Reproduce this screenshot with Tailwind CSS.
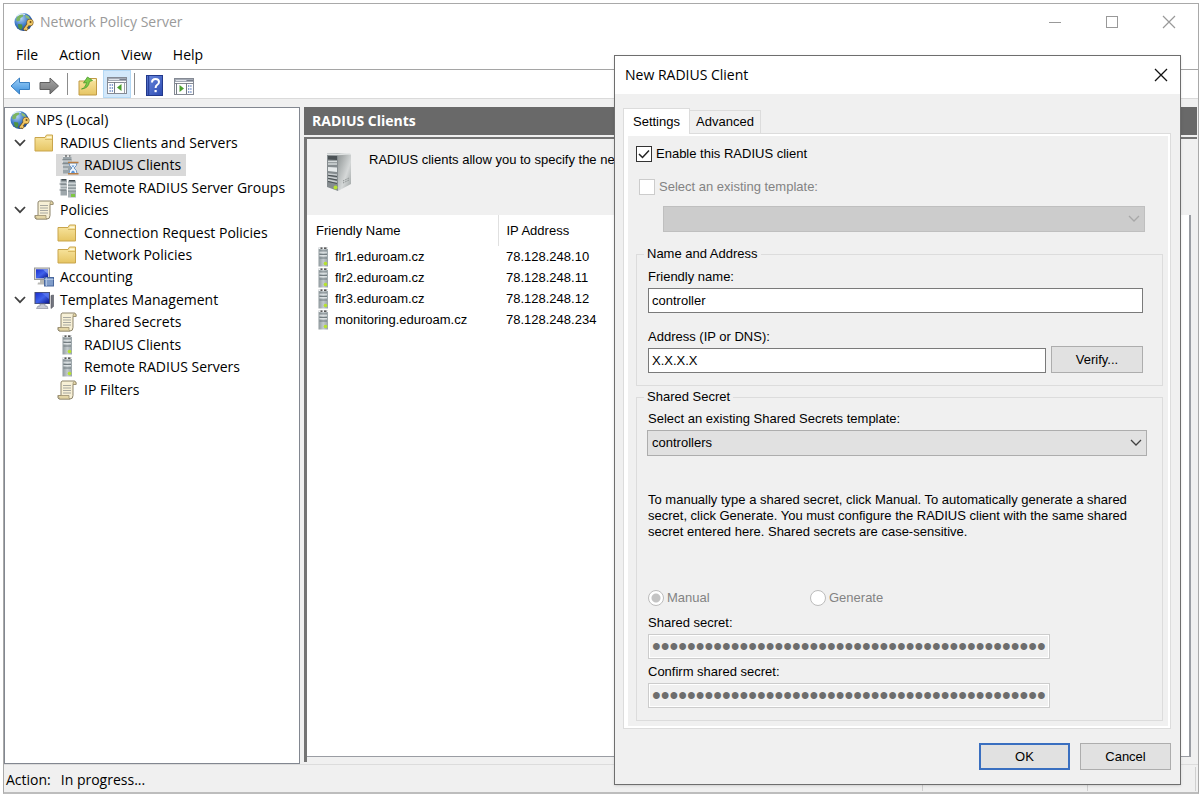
<!DOCTYPE html>
<html lang="en">
<head>
<meta charset="utf-8">
<title>Network Policy Server</title>
<script src="https://cdn.jsdelivr.net/npm/@tailwindcss/browser@4"></script>
</head>
<body class="bg-white">
<svg class="absolute size-0" aria-hidden="true">
  <defs>
    <radialGradient id="gBlue" cx="0.35" cy="0.3" r="0.8"><stop offset="0" stop-color="#b9d8f6"/><stop offset="0.5" stop-color="#3f7bc8"/><stop offset="1" stop-color="#1a3d78"/></radialGradient>
    <linearGradient id="gFold" x1="0" y1="0" x2="0" y2="1"><stop offset="0" stop-color="#f9e7a4"/><stop offset="1" stop-color="#e6c563"/></linearGradient>
    <linearGradient id="gArrow" x1="0" y1="0" x2="0" y2="1"><stop offset="0" stop-color="#9fd0f7"/><stop offset="1" stop-color="#3a8fdd"/></linearGradient>
    <linearGradient id="gArrowG" x1="0" y1="0" x2="0" y2="1"><stop offset="0" stop-color="#a5a5a5"/><stop offset="1" stop-color="#747474"/></linearGradient>
    <linearGradient id="gSrv" x1="0" y1="0" x2="1" y2="0"><stop offset="0" stop-color="#8f999d"/><stop offset="0.5" stop-color="#c3cacd"/><stop offset="1" stop-color="#9aa4a8"/></linearGradient>
    <linearGradient id="gScr" x1="0" y1="0" x2="1" y2="1"><stop offset="0" stop-color="#1c2fd0"/><stop offset="0.5" stop-color="#3f62ea"/><stop offset="1" stop-color="#0b1690"/></linearGradient>
    <linearGradient id="gHelp" x1="0" y1="0" x2="1" y2="1"><stop offset="0" stop-color="#6d8ce0"/><stop offset="1" stop-color="#2a49b0"/></linearGradient>
    <linearGradient id="gSide" x1="0" y1="0" x2="1" y2="1"><stop offset="0" stop-color="#8e9494"/><stop offset="0.6" stop-color="#d5d8d8"/><stop offset="1" stop-color="#9aa0a0"/></linearGradient>
    <symbol id="globe" viewBox="0 0 20 20">
      <circle cx="9.500" cy="10" r="9" fill="url(#gBlue)"/>
      <path d="M3 5Q5 2 9 2L9 4.500 6.500 6 6 8.500 3.500 9.500 2 8Z" fill="#7cb562"/>
      <path d="M11.500 2.500L15 4.500 16 7 13 6.500 11.500 5Z" fill="#8dbb74"/>
      <path d="M4 12L8 12.500 8.500 15 7 18 4.500 16Z" fill="#4f9440"/>
      <path d="M3 4Q7 0.500 11 2.500" stroke="#dcecfb" stroke-width="1.200" fill="none"/>
      <path d="M14.500 12L10 18M11.500 16L13.500 18" stroke="#7d5a1e" stroke-width="3.200"/>
      <circle cx="16" cy="10.500" r="3.500" fill="#7d5a1e"/>
      <circle cx="16" cy="10.500" r="2.900" fill="#f0c765"/>
      <circle cx="16.500" cy="10" r="1" fill="#6b4c12"/>
      <path d="M14.500 12L10.300 17.700M11.500 16L13.300 17.700" stroke="#f0c765" stroke-width="1.800"/>
    </symbol>
    <symbol id="folder" viewBox="0 0 20 18">
      <path d="M1 3.500H11L12.500 1H18.500V17H1Z" fill="url(#gFold)" stroke="#c9a54c" stroke-width="1"/>
      <path d="M13 2.500H17.500V4H12.500Z" fill="#fff8da"/>
      <path d="M11 5.500H18" stroke="#d9b963" stroke-width="1"/>
    </symbol>
    <symbol id="scroll" viewBox="0 0 20 20">
      <path d="M5 1H17.500Q19.500 1.500 19 4.500H16V15.500Q16 19 13 19H2Q0.500 18.500 1 15.500H4V3Q4 1.500 5 1Z" fill="#f7f0d6" stroke="#8c836a" stroke-width="1"/>
      <path d="M16 4.500Q15.500 2 17.500 1.500L19 2.500V4.500ZM1 15.500H12Q11.500 18 13 19H2.500Z" fill="#e3d5a5" stroke="#9a8f70" stroke-width="0.800"/>
      <path d="M6 5.500H14M6 8H14M6 10.500H14M6 13H14" stroke="#a8a8a0" stroke-width="1.200"/>
    </symbol>
    <symbol id="server" viewBox="0 0 12 20">
      <rect x="1.500" y="0.500" width="9.500" height="19" fill="url(#gSrv)"/>
      <rect x="1.500" y="0.500" width="9.500" height="1.500" fill="#f2f4f5"/>
      <rect x="3.500" y="0.500" width="2" height="1.300" fill="#333"/><rect x="7" y="0.500" width="2.500" height="1.300" fill="#333"/>
      <path d="M2.500 4H10M2.500 7.500H10M2.500 11H10" stroke="#6c767b" stroke-width="0.900"/>
      <path d="M2.500 5.200H10M2.500 8.700H10" stroke="#e4e8ea" stroke-width="1"/>
      <circle cx="8.500" cy="16.500" r="1.800" fill="#b6e22f"/>
    </symbol>
    <symbol id="servers" viewBox="0 0 18 20">
      <rect x="1.500" y="1" width="6.500" height="16.500" fill="#9ea7ab"/><rect x="2.500" y="1" width="4.500" height="1.500" fill="#414a4f"/>
      <path d="M0.500 5H8M1.500 8H8M0.500 11H8" stroke="#e4e8ea" stroke-width="1"/><path d="M0.500 6H7M0.500 12H7" stroke="#5a6469" stroke-width="0.800"/>
      <rect x="9" y="2.500" width="8" height="17" fill="#a9b2b6"/><rect x="10" y="2" width="6" height="1.500" fill="#414a4f"/>
      <path d="M9 6H17M9 9H17M9 12H17" stroke="#eef1f2" stroke-width="1.200"/><path d="M9 7H17M9 10H17M9 13H17" stroke="#6f797e" stroke-width="0.800"/>
      <rect x="12" y="16" width="4" height="3" fill="#7ec742"/>
    </symbol>
    <symbol id="serverwait" viewBox="0 0 18 20">
      <rect x="2" y="0.500" width="8.500" height="18" fill="#9aa4a9"/><rect x="2" y="0.500" width="8.500" height="1.500" fill="#eee"/><path d="M4 1H6M8 1H9.500" stroke="#333"/>
      <path d="M1 5H10.500M1 9H8" stroke="#5a6469" stroke-width="0.800"/><path d="M1 6H10.500M1 10H8M2 14H7" stroke="#e8ecee"/>
      <path d="M8 8H16Q16 11 13 13Q16 15 16 18.500H8Q8 15 11 13Q8 11 8 8Z" fill="#f1f7fd" stroke="#6f97c4" stroke-width="1"/>
      <path d="M10 18Q10.500 15.500 12 15.500Q13.500 15.500 14 18ZM10.500 10.500H13.500L12 12.500Z" fill="#5a93d8"/>
      <path d="M7 7.500H17.500M7 18.800H17.500" stroke="#b87c42" stroke-width="1.600"/>
    </symbol>
    <symbol id="acct" viewBox="0 0 20 20">
      <rect x="0.500" y="1" width="15" height="11.500" fill="#d8d8d4" stroke="#9a9a98"/>
      <rect x="2" y="2.300" width="12" height="9" fill="url(#gScr)"/>
      <path d="M9 2.500H14V7Z" fill="#8fa6f3" opacity="0.700"/>
      <path d="M6 13H10V15.500H12V17.500H3.500L4 15.500H6Z" fill="#b9b9b5"/>
      <rect x="10.500" y="10.500" width="9" height="8.500" fill="#7f9cc9" stroke="#4a689d"/>
      <path d="M12.500 10.500V19M10.500 12.500H19.500" stroke="#b9cbe6" stroke-width="0.800"/>
    </symbol>
    <symbol id="tmpl" viewBox="0 0 20 20">
      <rect x="0.500" y="2" width="15.500" height="12" fill="#4a4f6b"/>
      <rect x="1.500" y="2.800" width="13.500" height="10.500" fill="url(#gScr)"/>
      <path d="M8 3H15V9Z" fill="#5c7af0" opacity="0.700"/>
      <path d="M6 14H11V16H13L14 18.500H2.500L4 16H6Z" fill="#c7cad4" stroke="#7e8190" stroke-width="0.600"/>
      <path d="M17 5.500L19.500 5V16.500L17 18.500Z" fill="#72757f" stroke="#50525a" stroke-width="0.600"/>
    </symbol>
    <symbol id="bigserver" viewBox="0 0 26 40">
      <path d="M12 1L25 2.500V32L12 39Z" fill="url(#gSide)"/>
      <path d="M1 1.500L12 1V39L1 35Z" fill="#858c8f"/>
      <path d="M1 1.500L24 1.200 25 2.500 12 3.200 1 3Z" fill="#dfe2e2"/>
      <path d="M2 4L11 4V8L2 7.500Z" fill="#4b5255"/>
      <path d="M2 9.500H11M2 12H11" stroke="#d5dadb" stroke-width="1.400"/>
      <path d="M2 15L11 15.500V20L2 19Z" fill="#e6eaeb"/>
      <path d="M2 22L11 23M2 25L11 26.500M2 28L11 30" stroke="#c8cdcf" stroke-width="1.300"/>
      <path d="M2 23.300L11 24.500M2 26.300L11 28M2 29.500L11 31.500" stroke="#4b5255" stroke-width="1"/>
      <path d="M17 29L23 26M17 31L23 28" stroke="#868c8c" stroke-width="1" stroke-dasharray="1.500 1"/>
      <circle cx="9.500" cy="35.500" r="2" fill="#b6e22f"/>
    </symbol>
    <symbol id="chev" viewBox="0 0 12 8"><path d="M1 1L6 6.200 11 1" fill="none" stroke="currentColor" stroke-width="1.800"/></symbol>
    <symbol id="console" viewBox="0 0 20 17">
      <rect x="0.500" y="0.500" width="19" height="16" fill="#fdfdfd" stroke="#858a94"/>
      <rect x="1" y="1" width="18" height="3" fill="#a4aab5"/><path d="M2 2.500H12" stroke="#dfe2e8"/><path d="M13.500 2.500H14.500M15.500 2.500H16.500M17.500 2.500H18.500" stroke="#4e5563"/>
      <path d="M1 5.500H19" stroke="#858a94"/>
    </symbol>
  </defs>
</svg>

<div class="relative flex h-screen min-h-[800px] flex-col bg-white pt-[3px] pr-1 pb-[6px] pl-[3px] font-['Open_Sans',sans-serif] text-sm text-black">
  <div class="flex flex-1 flex-col border border-[#a9a9a9] border-b-2 border-b-[#bdbdbd] bg-[#f0f0f0]">

    <header class="flex h-9 items-center bg-white pl-[10px] pr-[22px]">
      <svg class="size-5"><use href="#globe"/></svg>
      <h1 class="ml-[6px] flex-1 text-[#9a9a9a]">Network Policy Server</h1>
      <div class="flex items-center gap-[43px] text-[#999]">
        <button aria-label="Minimize"><svg class="h-[14px] w-[14px]" viewBox="0 0 14 14"><path d="M1 7.500H13" stroke="currentColor"/></svg></button>
        <button aria-label="Maximize"><svg class="h-[14px] w-[14px]" viewBox="0 0 14 14"><rect x="1.500" y="1.500" width="11" height="11" fill="none" stroke="currentColor"/></svg></button>
        <button aria-label="Close"><svg class="h-[14px] w-[14px]" viewBox="0 0 14 14"><path d="M1 1L13 13M13 1L1 13" stroke="currentColor" stroke-width="1.200"/></svg></button>
      </div>
    </header>

    <nav class="flex h-[30px] items-center gap-[21px] border-b border-[#a5a5a5] bg-white pl-3">
      <button>File</button><button>Action</button><button>View</button><button>Help</button>
    </nav>

    <div class="flex h-7 items-center bg-white pl-[6px]">
      <button aria-label="Back" class="pt-1"><svg class="h-[18px] w-[21px]" viewBox="0 0 21 18"><path d="M1 9L9.500 1V5.500H19.500V12.500H9.500V17Z" fill="url(#gArrow)" stroke="#3a7fc1"/></svg></button>
      <button aria-label="Forward" class="ml-2 pt-1"><svg class="h-[18px] w-[21px]" viewBox="0 0 21 18"><path d="M19.500 9L11 1V5.500H1V12.500H11V17Z" fill="url(#gArrowG)" stroke="#5f5f5f"/></svg></button>
      <span class="ml-[7px] h-[22px] w-px bg-[#8c8c8c]"></span>
      <button aria-label="Up one level" class="ml-[10px] pt-1"><svg class="h-[20px] w-[20px]" viewBox="0 0 20 20"><path d="M1 5H10L12 2.500H18.500V19H1Z" fill="url(#gFold)" stroke="#c09a45"/><path d="M13 4H17.500" stroke="#fff8da" stroke-width="1.500"/><path d="M3.500 13Q7.500 12 8.500 6.500L5.500 7 9.500 1 14.500 4.500 11.500 5.500Q10.500 12.500 3.500 13Z" fill="#7cca4a" stroke="#4a9a2a" stroke-width="0.800"/></svg></button>
      <button aria-label="Show or hide console tree" class="ml-[5px] flex h-7 w-7 items-center justify-center border border-[#b5d9f5] bg-[#d3e8fa] pt-[3px]"><svg class="h-[17px] w-5" viewBox="0 0 20 17"><use href="#console"/><path d="M7.500 5V16" stroke="#747a85"/><path d="M2.500 8H6M2.500 11H6M2.500 14H6" stroke="#5f7fc0" stroke-width="1.300" stroke-dasharray="1.300 1"/><path d="M14.500 7V14L10 10.500Z" fill="#4aa02c"/><path d="M17.500 5V16" stroke="#9aa0aa"/></svg></button>
      <span class="ml-[3px] h-[22px] w-px bg-[#8c8c8c]"></span>
      <button aria-label="Help topics" class="ml-[11px] pt-[2px]"><svg class="h-[21px] w-[17px]" viewBox="0 0 17 21"><rect x="0.500" y="0.500" width="16" height="20" fill="url(#gHelp)" stroke="#22398c"/><path d="M2.500 1V20" stroke="#2a419a" stroke-width="1.500"/><path d="M6 7.500Q6 4 9.500 4Q13 4 13 7Q13 8.800 11 10Q9.600 11 9.600 13" fill="none" stroke="#fff" stroke-width="2"/><rect x="8.500" y="15" width="2.200" height="2.200" fill="#fff"/></svg></button>
      <button aria-label="Show or hide action pane" class="ml-[11px] pt-1"><svg class="h-[17px] w-5" viewBox="0 0 20 17"><use href="#console"/><path d="M12.500 5V16M2.500 5V16" stroke="#747a85"/><path d="M14 8H17.500M14 11H17.500M14 14H17.500" stroke="#5f7fc0" stroke-width="1.300" stroke-dasharray="1.300 1"/><path d="M5.500 7V14L10 10.500Z" fill="#4aa02c"/></svg></button>
    </div>
    <div class="h-[9px] border-t border-[#dadada]"></div>

    <main class="flex flex-1 gap-1">
      <aside class="w-[296px] border border-[#828790] bg-white pt-px">
        <ul role="tree" class="grid h-[292px] auto-rows-fr text-sm">
          <li role="treeitem" class="flex items-center gap-[6px] pl-[5px]"><svg class="size-5"><use href="#globe"/></svg>NPS (Local)</li>
          <li role="treeitem" class="flex items-center pl-[9px]"><svg class="h-2 w-3 text-[#404040]"><use href="#chev"/></svg><svg class="ml-2 mr-[6px] h-[18px] w-5"><use href="#folder"/></svg>RADIUS Clients and Servers</li>
          <li role="treeitem" aria-selected="true" class="flex items-center pl-[51px]"><span class="flex h-full items-center bg-[#d9d9d9] pl-[5px] pr-[5px]"><svg class="mr-[5px] h-5 w-[18px]"><use href="#serverwait"/></svg>RADIUS Clients</span></li>
          <li role="treeitem" class="flex items-center pl-[54px]"><svg class="mr-[7px] h-5 w-[18px]"><use href="#servers"/></svg>Remote RADIUS Server Groups</li>
          <li role="treeitem" class="flex items-center pl-[9px]"><svg class="h-2 w-3 text-[#404040]"><use href="#chev"/></svg><svg class="ml-2 mr-[6px] size-5"><use href="#scroll"/></svg>Policies</li>
          <li role="treeitem" class="flex items-center pl-[52px]"><svg class="mr-[7px] h-[18px] w-5"><use href="#folder"/></svg>Connection Request Policies</li>
          <li role="treeitem" class="flex items-center pl-[52px]"><svg class="mr-[7px] h-[18px] w-5"><use href="#folder"/></svg>Network Policies</li>
          <li role="treeitem" class="flex items-center pl-[29px]"><svg class="mr-[6px] size-5"><use href="#acct"/></svg>Accounting</li>
          <li role="treeitem" class="flex items-center pl-[9px]"><svg class="h-2 w-3 text-[#404040]"><use href="#chev"/></svg><svg class="ml-2 mr-[6px] size-5"><use href="#tmpl"/></svg>Templates Management</li>
          <li role="treeitem" class="flex items-center pl-[52px]"><svg class="mr-[7px] size-5"><use href="#scroll"/></svg>Shared Secrets</li>
          <li role="treeitem" class="flex items-center pl-[56px]"><svg class="mr-[11px] h-5 w-3"><use href="#server"/></svg>RADIUS Clients</li>
          <li role="treeitem" class="flex items-center pl-[56px]"><svg class="mr-[11px] h-5 w-3"><use href="#server"/></svg>Remote RADIUS Servers</li>
          <li role="treeitem" class="flex items-center pl-[52px]"><svg class="mr-[7px] size-5"><use href="#scroll"/></svg>IP Filters</li>
        </ul>
      </aside>

      <section class="mr-px flex flex-1 flex-col pb-[2px]">
        <h2 class="flex h-7 items-center bg-[#696969] pl-2 font-bold text-white">RADIUS Clients</h2>
        <div class="mt-[2px] flex flex-1 flex-col border-t-2 border-l-[3px] border-[#747474] pb-[5px] pr-[6px] font-['Liberation_Sans',sans-serif]">
          <div class="flex h-[76px] items-start pl-[19px] pt-[13px]">
            <svg class="h-10 w-[26px]"><use href="#bigserver"/></svg>
            <p class="ml-[17px] text-[13px] leading-4 whitespace-nowrap">RADIUS clients allow you to specify the network</p>
          </div>
          <div class="flex-1 border-r-2 border-b border-[#9a9da3] bg-white">
            <table class="text-left text-[13px] leading-4">
              <thead><tr class="h-[31px]"><th class="w-[191px] border-r border-[#e0e0e0] pl-[9px] font-normal">Friendly Name</th><th class="pl-2 font-normal">IP Address</th></tr></thead>
              <tbody>
                <tr class="h-[21px]"><td class="pl-[10px]"><span class="flex items-center gap-[6px]"><svg class="h-5 w-3"><use href="#server"/></svg>flr1.eduroam.cz</span></td><td class="pl-2">78.128.248.10</td></tr>
                <tr class="h-[21px]"><td class="pl-[10px]"><span class="flex items-center gap-[6px]"><svg class="h-5 w-3"><use href="#server"/></svg>flr2.eduroam.cz</span></td><td class="pl-2">78.128.248.11</td></tr>
                <tr class="h-[21px]"><td class="pl-[10px]"><span class="flex items-center gap-[6px]"><svg class="h-5 w-3"><use href="#server"/></svg>flr3.eduroam.cz</span></td><td class="pl-2">78.128.248.12</td></tr>
                <tr class="h-[21px]"><td class="pl-[10px]"><span class="flex items-center gap-[6px]"><svg class="h-5 w-3"><use href="#server"/></svg>monitoring.eduroam.cz</span></td><td class="pl-2">78.128.248.234</td></tr>
              </tbody>
            </table>
          </div>
        </div>
      </section>
    </main>

    <footer class="flex h-7 items-center border-t border-[#dcdcdc] pl-[2px]">
      <span class="flex flex-1 gap-[10px] pt-[2px]"><span>Action:</span><span>In progress...</span></span>
      <span class="h-6 w-[166px] border-x border-[#d0d0d0]"></span>
      <span class="mr-[2px] h-6 w-[108px] border-r border-[#d0d0d0]"></span>
    </footer>
  </div>

  <div role="dialog" aria-label="New RADIUS Client" class="absolute top-[55px] left-[614px] w-[567px] border border-[#6e6e6e] bg-[#f0f0f0] pb-[14px] font-['Liberation_Sans',sans-serif] text-[13px] leading-4 shadow-sm">
    <div class="flex h-[38px] items-center justify-between bg-white pl-[10px] pr-3 font-['Open_Sans',sans-serif] text-sm">
      <h2>New RADIUS Client</h2>
      <button aria-label="Close dialog"><svg class="size-[14px]" viewBox="0 0 14 14"><path d="M1 1L13 13M13 1L1 13" stroke="#111" stroke-width="1.300"/></svg></button>
    </div>

    <div class="pt-[14px] pr-[9px] pl-2">
      <div role="tablist" class="flex items-end">
        <button role="tab" aria-selected="true" class="-mb-px h-[26px] w-[67px] border border-b-0 border-[#dcdcdc] bg-white">Settings</button>
        <button role="tab" class="h-[23px] w-[71px] border border-b-0 border-l-0 border-[#dcdcdc]">Advanced</button>
      </div>
      <div role="tabpanel" class="border border-[#dcdcdc] bg-white pt-[2px] pr-[2px] pb-[2px] pl-1">
        <div class="bg-[#f0f0f0] pt-[10px] pr-[5px] pb-[5px] pl-2">
          <label class="flex items-center gap-1">
            <span class="relative flex size-4"><input type="checkbox" checked class="peer size-4 appearance-none border border-[#333] bg-white"><svg class="pointer-events-none absolute inset-0 hidden size-4 peer-checked:block" viewBox="0 0 16 16"><path d="M3 8L6.500 11.500 13 4.500" fill="none" stroke="#222" stroke-width="1.500"/></svg></span>
            Enable this RADIUS client
          </label>
          <label class="mt-[17px] ml-[3px] flex items-center gap-1 text-[#838383]">
            <input type="checkbox" disabled class="size-4 appearance-none border border-[#ccc] bg-white">Select an existing template:
          </label>
          <div class="relative mt-[11px] mr-[18px] ml-[27px]">
            <select disabled aria-label="Existing template" class="block h-[26px] w-full appearance-none border border-[#bfbfbf] bg-[#cccccc]"><option></option></select>
            <svg class="pointer-events-none absolute top-[9px] right-[5px] h-2 w-3 text-[#a8a8a8]" viewBox="0 0 12 8"><path d="M1 1L6 6 11 1" fill="none" stroke="currentColor" stroke-width="1.300"/></svg>
          </div>

          <fieldset class="mt-[14px] border border-[#dcdcdc] pb-3 pl-[11px] pr-[19px]">
            <legend class="-ml-1 px-[3px]">Name and Address</legend>
            <label for="fname" class="mt-[7px] block">Friendly name:</label>
            <input id="fname" type="text" value="controller" class="mt-[3px] block h-[25px] w-full border border-[#7a7a7a] bg-white px-[3px]">
            <label for="addr" class="mt-4 block">Address (IP or DNS):</label>
            <div class="mt-[1px] flex items-end gap-[5px]">
              <input id="addr" type="text" value="X.X.X.X" class="h-[25px] min-w-0 flex-1 border border-[#7a7a7a] bg-white px-[3px]">
              <button class="h-[27px] w-[92px] border border-[#adadad] bg-[#e1e1e1]">Verify...</button>
            </div>
          </fieldset>

          <fieldset class="mt-[3px] border border-[#dcdcdc] pb-3 pl-[11px] pr-[15px]">
            <legend class="-ml-1 px-[3px]">Shared Secret</legend>
            <label for="tmplsel" class="mt-[6px] block">Select an existing Shared Secrets template:</label>
            <div class="relative mt-[3px] -ml-px">
              <select id="tmplsel" class="block h-[26px] w-full appearance-none border border-[#adadad] bg-[#e1e1e1] px-1"><option>controllers</option></select>
              <svg class="pointer-events-none absolute top-[9px] right-[5px] h-2 w-3 text-[#404040]" viewBox="0 0 12 8"><path d="M1 1L6 6 11 1" fill="none" stroke="currentColor" stroke-width="1.300"/></svg>
            </div>
            <p class="mt-[36px]">To manually type a shared secret, click Manual. To automatically generate a shared secret, click Generate. You must configure the RADIUS client with the same shared secret entered here. Shared secrets are case-sensitive.</p>
            <div class="mt-[50px] flex text-[#838383]">
              <label class="flex w-[162px] items-center gap-[3px]"><input type="radio" name="mode" checked disabled class="size-4 appearance-none rounded-full border border-[#bcbcbc] bg-white bg-[radial-gradient(circle,#c4c4c4_4px,#fff_5px)]">Manual</label>
              <label class="flex items-center gap-[3px]"><input type="radio" name="mode" disabled class="size-4 appearance-none rounded-full border border-[#bcbcbc] bg-white">Generate</label>
            </div>
            <label for="sec1" class="mt-[9px] block">Shared secret:</label>
            <input id="sec1" type="password" disabled value="123456789012345678901234567890123456789012345" class="mt-[3px] block h-[25px] w-[402px] border border-[#cccccc] bg-[#f0f0f0] px-[3px] text-[25px] leading-5 text-[#6d6d6d] ring-1 ring-white ring-inset">
            <label for="sec2" class="mt-[5px] block">Confirm shared secret:</label>
            <input id="sec2" type="password" disabled value="123456789012345678901234567890123456789012345" class="mt-[3px] block h-[25px] w-[402px] border border-[#cccccc] bg-[#f0f0f0] px-[3px] text-[25px] leading-5 text-[#6d6d6d] ring-1 ring-white ring-inset">
          </fieldset>
        </div>
      </div>
    </div>
    <div class="mt-[14px] flex justify-end gap-[10px] pr-[9px]">
      <button class="h-[27px] w-[91px] border-2 border-[#3a6fc0] bg-[#e1e1e1]">OK</button>
      <button class="h-[27px] w-[91px] border border-[#adadad] bg-[#e1e1e1]">Cancel</button>
    </div>
  </div>
</div>
</body>
</html>
